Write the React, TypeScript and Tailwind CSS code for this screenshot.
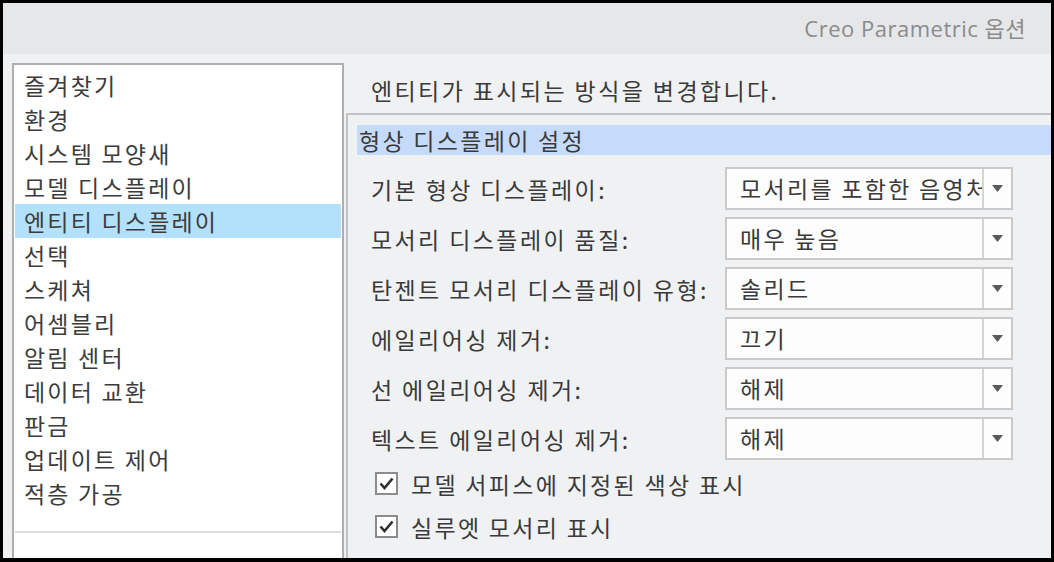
import React from "react";

const KR = { fontFamily: '"Noto Sans CJK KR", "Noto Sans", sans-serif' };

const items = [
  "즐겨찾기",
  "환경",
  "시스템 모양새",
  "모델 디스플레이",
  "엔티티 디스플레이",
  "선택",
  "스케쳐",
  "어셈블리",
  "알림 센터",
  "데이터 교환",
  "판금",
  "업데이트 제어",
  "적층 가공",
];

const rows = [
  { label: "기본 형상 디스플레이:", value: "모서리를 포함한 음영처리" },
  { label: "모서리 디스플레이 품질:", value: "매우 높음" },
  { label: "탄젠트 모서리 디스플레이 유형:", value: "솔리드" },
  { label: "에일리어싱 제거:", value: "끄기" },
  { label: "선 에일리어싱 제거:", value: "해제" },
  { label: "텍스트 에일리어싱 제거:", value: "해제" },
];

function Dropdown({ value }: { value: string }) {
  return (
    <div className="flex h-[43px] w-[288px] border-2 border-[#cacaca] bg-[#fdfdfd]">
      <div className="flex-1 overflow-hidden whitespace-nowrap pl-[13px] text-[23px] leading-[39px] tracking-[2.3px] text-[#3a3a3a]">
        {value}
      </div>
      <div className="flex w-[29px] items-center justify-center border-l-2 border-[#d4d4d4]">
        <svg width="11" height="7" viewBox="0 0 11 7">
          <polygon points="0,0 11,0 5.5,7" fill="#5a5a5a" />
        </svg>
      </div>
    </div>
  );
}

function Check({ label }: { label: string }) {
  return (
    <div className="flex h-[43px] items-center pl-[27px]">
      <div className="flex h-[23px] w-[23px] items-center justify-center border-2 border-[#8c8c8c] bg-white">
        <svg width="15" height="13" viewBox="0 0 15 13">
          <path d="M1.5 6.5 L5.5 11 L13.5 1.5" fill="none" stroke="#2e2e2e" strokeWidth="2.6" />
        </svg>
      </div>
      <span className="ml-[13px] text-[23px] leading-[34px] tracking-[2.3px] text-[#3a3a3a]">{label}</span>
    </div>
  );
}

export default function App() {
  return (
    <div className="h-[562px] w-[1054px] overflow-hidden bg-black pb-[4px] pl-[3px] pr-[3px] pt-[3px]" style={KR}>
      <div className="flex h-full w-full flex-col overflow-hidden">
        <div className="flex h-[51px] shrink-0 items-center justify-end bg-[#e6e7e9] pr-[25px]">
          <span
            className="text-[22px] tracking-[0.5px] text-[#8b8b8b]"
            style={{ fontFamily: '"Open Sans", "Noto Sans CJK KR", sans-serif' }}
          >
            Creo Parametric 옵션
          </span>
        </div>
        <div className="flex min-h-0 flex-1 bg-[#f0f1f3] pl-[9px] pt-[9px]">
          <div className="h-[560px] w-[332px] shrink-0 border-2 border-[#aeaeae] bg-white pt-[3px]">
            {items.map((it) => {
              const sel = it === "엔티티 디스플레이";
              return (
                <div
                  key={it}
                  className={
                    "mx-[1px] h-[34px] whitespace-nowrap pl-[9px] text-[23px] leading-[34px] tracking-[2.2px] text-[#3c3c3c] " +
                    (sel ? "bg-[#b3e0fb]" : "")
                  }
                >
                  {it}
                </div>
              );
            })}
            <div className="mx-[1px] mt-[21px] h-[2px] bg-[#dcdcdc]" />
            <div className="mt-[18px] pl-[10px] text-[23px] leading-[34px] tracking-[2.2px] text-[#3c3c3c]">사용자 정의</div>
          </div>
          <div className="ml-[2px] flex min-w-0 flex-1 flex-col pt-[10px]">
            <div className="h-[34px] whitespace-nowrap pl-[25px] text-[23px] leading-[34px] tracking-[2.4px] text-[#3a3a3a]">
              엔티티가 표시되는 방식을 변경합니다.
            </div>
            <div className="mt-[6px] flex-1 border-l-2 border-t-2 border-[#c2c2c2]">
              <div className="ml-[9px] mt-[10px] h-[30px] whitespace-nowrap bg-[#c6dafa] pl-[2px] text-[23px] leading-[30px] tracking-[2.3px] text-[#3a3a3a]">
                형상 디스플레이 설정
              </div>
              <div className="mt-[12px] flex flex-col gap-[7px] pl-[23px]">
                {rows.map((r) => (
                  <div key={r.label} className="flex h-[43px] items-center">
                    <div className="w-[354px] whitespace-nowrap text-[23px] leading-[34px] tracking-[2.4px] text-[#3a3a3a]">
                      {r.label}
                    </div>
                    <Dropdown value={r.value} />
                  </div>
                ))}
              </div>
              <div className="mt-[2px]">
                <Check label="모델 서피스에 지정된 색상 표시" />
                <Check label="실루엣 모서리 표시" />
              </div>
            </div>
          </div>
        </div>
      </div>
    </div>
  );
}
